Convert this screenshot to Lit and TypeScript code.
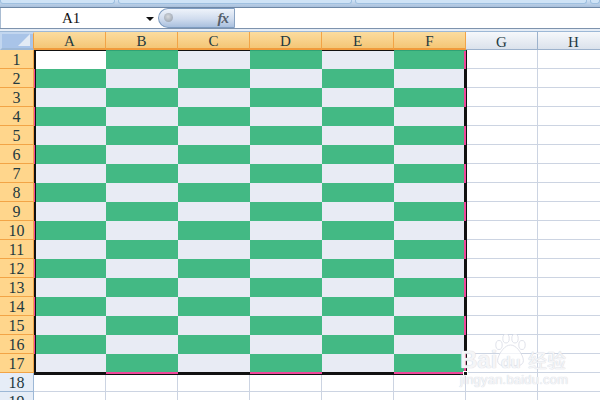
import { LitElement, html, css, svg } from "lit";
import { customElement } from "lit/decorators.js";

const COLS = ["A", "B", "C", "D", "E", "F", "G", "H"];
const ROWS = Array.from({ length: 19 }, (_, i) => i + 1);

@customElement("app-root")
export class AppRoot extends LitElement {
  static styles = css`
    :host {
      display: block;
      position: relative;
      width: 600px;
      height: 400px;
      overflow: hidden;
      background: #fff;
      font-family: "Liberation Serif", "DejaVu Serif", serif;
      color: #23393f;
    }
    .tabs {
      height: 8px;
      display: flex;
      gap: 3px;
      background: linear-gradient(#cfe2f5, #a9c0dc);
      border-bottom: 1px solid #6f88a6;
      box-sizing: border-box;
    }
    .tab {
      height: 3px;
      background: #cfe3f6;
      border: 1px solid #9fc0e0;
      border-top: 0;
      border-radius: 0 0 3px 3px;
    }
    .t1 { width: 113px; }
    .t2 { width: 232px; }
    .t3 { width: 230px; }
    .t4 { flex: 1; }
    .formula {
      height: 20px;
      display: flex;
      background: #fff;
    }
    .name {
      width: 159px;
      display: flex;
      align-items: center;
      box-sizing: border-box;
      padding: 1px 5px 0 61px;
      font-size: 15px;
      color: #111;
      border-left: 1px solid #a9bcd2;
    }
    .name span { flex: 1; }
    .caret {
      width: 0;
      height: 0;
      border-left: 4px solid transparent;
      border-right: 4px solid transparent;
      border-top: 4px solid #111;
    }
    .pill {
      width: 77px;
      margin-left: -1px;
      box-sizing: border-box;
      display: flex;
      align-items: center;
      justify-content: flex-end;
      padding-right: 6px;
      border: 1px solid #7e9cc0;
      border-right: 1px solid #8aa3c2;
      border-radius: 10px 0 0 10px;
      background: linear-gradient(#eef3fa, #d0dcee 55%, #a9c0de);
      position: relative;
    }
    .dot {
      position: absolute;
      left: 5px;
      top: 4px;
      width: 9px;
      height: 9px;
      border-radius: 50%;
      background: radial-gradient(circle at 45% 40%, #d6d9dd, #8d98a6);
    }
    .fx {
      font-style: italic;
      font-weight: bold;
      font-size: 15px;
      color: #555f6b;
      letter-spacing: -1px;
    }
    .input {
      flex: 1;
      background: #fff;
    }
    .strip {
      height: 4px;
      box-sizing: border-box;
      background: #e6edf6;
      border-top: 1px solid #7e93ad;
      border-bottom: 1px solid #9db8d6;
    }
    .sheet {
      display: grid;
      grid-template-columns: 34px repeat(8, 72px);
      grid-template-rows: 18px repeat(19, 19px);
      position: relative;
    }
    .corner {
      box-sizing: border-box;
      background: #a9c4e8;
      border: 2px solid #c2d6ef;
      border-right: 1px solid #f0a040;
      border-bottom-color: #9db8d6;
      position: relative;
    }
    .tri {
      position: absolute;
      right: 3px;
      bottom: 2px;
      width: 0;
      height: 0;
      border-left: 12px solid transparent;
      border-bottom: 12px solid #e3ebf5;
    }
    .ch, .rh {
      box-sizing: border-box;
      display: flex;
      align-items: center;
      justify-content: center;
      font-size: 15px;
    }
    .ch {
      background: linear-gradient(#f6f8fb, #dbe2ec);
      border-right: 1px solid #9db2cc;
      border-bottom: 1px solid #9db2cc;
      padding-top: 3px;
    }
    .ch.on {
      background: linear-gradient(#fbdc9f, #f4c676);
      border-right: 1px solid #f2a446;
      border-bottom: 2px solid #f09a3c;
    }
    .rh {
      background: #e6edf7;
      border-right: 1px solid #9db8d6;
      border-bottom: 1px solid #9db8d6;
      font-size: 16px;
      padding-top: 2px;
    }
    .rh.on {
      background: #ffd68c;
      border-right: 1px solid #f2a446;
      border-bottom: 1px solid #f2a446;
    }
    .c {
      box-sizing: border-box;
      background: #fff;
      border-right: 1px solid #ccd4e2;
      border-bottom: 1px solid #ccd4e2;
    }
    .c.white { border: 0; background: #fff; }
    .c.gray { border: 0; background: #e8ebf4; }
    .c.green { border: 0; background: #43b984; }
    .selection {
      position: absolute;
      left: 34px;
      top: 18px;
      width: 433px;
      height: 325px;
      box-sizing: border-box;
      border-top: 1px solid #111;
      border-left: 2px solid #111;
      border-right: 3px solid #111;
      border-bottom: 3px solid #111;
    }
    .pink {
      position: absolute;
      background: #f0469a;
    }
    .seam {
      position: absolute;
      background: #2fa276;
    }
    .handle {
      position: absolute;
      left: 463px;
      top: 339px;
      width: 5px;
      height: 5px;
      box-sizing: border-box;
      background: #111;
      border: 1px solid #fff;
    }
    .wm {
      position: absolute;
      left: 458px;
      top: 332px;
      width: 112px;
      height: 56px;
      color: rgba(255, 255, 255, 0.75);
      font-family: "Liberation Sans", "Noto Sans CJK SC", sans-serif;
      text-shadow: 0 0 1px #d4d7e0, 0 0 1px #d4d7e0;
    }
    .wm svg { position: absolute; left: 36px; top: 2px; }
    .wm .b {
      position: absolute;
      left: 2px;
      top: 16px;
      font-size: 24px;
      font-weight: bold;
      line-height: 24px;
    }
    .wm .du { position: absolute; left: 43px; top: 22px; font-size: 16px; font-weight: bold; line-height: 18px; }
    .wm .cn { position: absolute; left: 70px; top: 18px; font-size: 19px; line-height: 24px; white-space: nowrap; }
    .wm .url { position: absolute; left: 2px; top: 40px; font-size: 13px; line-height: 15px; white-space: nowrap; letter-spacing: 0.2px; }
  `;

  private cls(r: number, c: number) {
    if (c > 5 || r > 17) return "";
    if (r === 1 && c === 0) return "white";
    return (r + c) % 2 === 1 ? "gray" : "green";
  }

  render() {
    return html`
      <div class="tabs">
        <div class="tab t1"></div>
        <div class="tab t2"></div>
        <div class="tab t3"></div>
        <div class="tab t4"></div>
      </div>
      <div class="formula">
        <div class="name"><span>A1</span><i class="caret"></i></div>
        <div class="pill"><i class="dot"></i><span class="fx">fx</span></div>
        <div class="input"></div>
      </div>
      <div class="strip"></div>
      <div class="sheet">
        <div class="corner"><i class="tri"></i></div>
        ${COLS.map((l, i) => html`<div class="ch ${i < 6 ? "on" : ""}">${l}</div>`)}
        ${ROWS.map(
          (r) => html`
            <div class="rh ${r <= 17 ? "on" : ""}">${r}</div>
            ${COLS.map((_, c) => html`<div class="c ${this.cls(r, c)}"></div>`)}
          `
        )}
        <div class="selection"></div>
        ${ROWS.filter((r) => r <= 17).map((r) =>
          r % 2 === 1
            ? html`<i class="pink" style="left:464px;top:${18 + (r - 1) * 19}px;width:2px;height:${r === 17 ? 17 : 19}px"></i>`
            : html`<i class="pink" style="left:34px;top:${18 + (r - 1) * 19}px;width:1px;height:19px"></i>`
        )}
        ${[1, 3, 5].map(
          (c) => html`
            <i class="pink" style="left:${34 + c * 72}px;top:340px;width:72px;height:2px"></i>
            <i class="seam" style="left:${34 + c * 72}px;top:18px;width:72px;height:1px"></i>
          `
        )}
        <i class="handle"></i>
      </div>
      <div class="wm">
        ${svg`<svg width="40" height="34" viewBox="0 0 40 34" fill="rgba(255,255,255,.75)" stroke="#d8dbe4" stroke-width="0.8">
          <ellipse cx="5" cy="11" rx="3.2" ry="4.5"/>
          <ellipse cx="12" cy="4.5" rx="3.2" ry="4.5"/>
          <ellipse cx="21" cy="4.5" rx="3.2" ry="4.5"/>
          <ellipse cx="28" cy="11" rx="3.2" ry="4.5"/>
          <path d="M16.500 11 C11 11 6 18 4 24 C2 31 8 33 16.500 31 C25 33 31 31 29 24 C27 18 22 11 16.500 11 Z"/>
        </svg>`}
        <span class="b">Bai</span>
        <span class="du">du</span>
        <span class="cn">经验</span>
        <span class="url">jingyan.baidu.com</span>
      </div>
    `;
  }
}
